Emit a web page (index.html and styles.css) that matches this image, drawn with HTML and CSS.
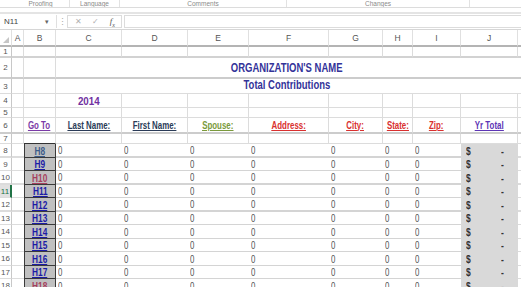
FILE: index.html
```html
<!DOCTYPE html>
<html>
<head>
<meta charset="utf-8">
<link rel="stylesheet" href="styles.css">
</head>
<body>
<div class="ribbon">
  <div class="grp sp"></div>
  <div class="grp g1"><span>Proofing</span></div>
  <div class="grp g2"><span>Language</span></div>
  <div class="grp g3"><span>Comments</span></div>
  <div class="grp g4"><span>Changes</span></div>
  <div class="grp rest"></div>
</div>
<div class="band"></div>
<div class="fbar">
  <div class="namebox"><span class="nm">N11</span><span class="arrow">▾</span></div>
  <div class="dots">⋮</div>
  <div class="fxbox"><span class="x">✕</span><span class="ok">✓</span><span class="fx">f<sub>x</sub></span></div>
  <div class="input"></div>
</div>
<div class="sheet">
  <div class="row hdr">
    <div class="corner"><span class="tri"></span></div>
    <div>A</div><div>B</div><div>C</div><div>D</div><div>E</div><div>F</div><div>G</div><div>H</div><div>I</div><div>J</div><div class="x"></div>
  </div>
  <div class="row r1">
    <div class="rh">1</div><div></div><div></div><div></div><div></div><div></div><div></div><div></div><div></div><div></div><div></div><div class="x"></div>
  </div>
  <div class="row r2 tall">
    <div class="rh">2</div><div></div><div></div><div class="title"><span class="n">ORGANIZATION'S NAME</span></div><div class="x"></div>
  </div>
  <div class="row r3 tall">
    <div class="rh">3</div><div></div><div></div><div class="title"><span class="n">Total Contributions</span></div><div class="x"></div>
  </div>
  <div class="row r4">
    <div class="rh">4</div><div></div><div></div><div class="year"><span class="n">2014</span></div><div></div><div></div><div></div><div></div><div></div><div></div><div></div><div class="x"></div>
  </div>
  <div class="row r5">
    <div class="rh">5</div><div></div><div></div><div></div><div></div><div></div><div></div><div></div><div></div><div></div><div></div><div class="x"></div>
  </div>
  <div class="row r6">
    <div class="rh">6</div><div></div>
    <div class="hd purple"><span class="n">Go To</span></div>
    <div class="hd slate"><span class="n">Last Name:</span></div>
    <div class="hd slate"><span class="n">First Name:</span></div>
    <div class="hd olive"><span class="n">Spouse:</span></div>
    <div class="hd red"><span class="n">Address:</span></div>
    <div class="hd red"><span class="n">City:</span></div>
    <div class="hd red"><span class="n">State:</span></div>
    <div class="hd red"><span class="n">Zip:</span></div>
    <div class="hd violet"><span class="n">Yr Total</span></div>
    <div class="x"></div>
  </div>
  <div class="row r7">
    <div class="rh">7</div><div></div><div class="btop"></div><div></div><div></div><div></div><div></div><div></div><div></div><div></div><div></div><div class="x"></div>
  </div>
  <div class="row d thick">
    <div class="rh">8</div><div class="a"></div><div class="go"><span class="n lk l-slate">H8</span></div>
    <div class="v"><span>0</span></div><div class="v"><span>0</span></div><div class="v"><span>0</span></div><div class="v"><span>0</span></div><div class="v"><span>0</span></div><div class="v"><span>0</span></div><div class="v"><span>0</span></div>
    <div class="tot"><span>$</span><span>-</span></div><div class="x"></div>
  </div>
  <div class="row d">
    <div class="rh">9</div><div class="a"></div><div class="go"><span class="n lk">H9</span></div>
    <div class="v"><span>0</span></div><div class="v"><span>0</span></div><div class="v"><span>0</span></div><div class="v"><span>0</span></div><div class="v"><span>0</span></div><div class="v"><span>0</span></div><div class="v"><span>0</span></div>
    <div class="tot"><span>$</span><span>-</span></div><div class="x"></div>
  </div>
  <div class="row d thick">
    <div class="rh">10</div><div class="a"></div><div class="go"><span class="n lk l-visited">H10</span></div>
    <div class="v"><span>0</span></div><div class="v"><span>0</span></div><div class="v"><span>0</span></div><div class="v"><span>0</span></div><div class="v"><span>0</span></div><div class="v"><span>0</span></div><div class="v"><span>0</span></div>
    <div class="tot"><span>$</span><span>-</span></div><div class="x"></div>
  </div>
  <div class="row d">
    <div class="rh sel">11</div><div class="a"></div><div class="go"><span class="n lk">H11</span></div>
    <div class="v"><span>0</span></div><div class="v"><span>0</span></div><div class="v"><span>0</span></div><div class="v"><span>0</span></div><div class="v"><span>0</span></div><div class="v"><span>0</span></div><div class="v"><span>0</span></div>
    <div class="tot"><span>$</span><span>-</span></div><div class="x"></div>
  </div>
  <div class="row d thick">
    <div class="rh">12</div><div class="a"></div><div class="go"><span class="n lk">H12</span></div>
    <div class="v"><span>0</span></div><div class="v"><span>0</span></div><div class="v"><span>0</span></div><div class="v"><span>0</span></div><div class="v"><span>0</span></div><div class="v"><span>0</span></div><div class="v"><span>0</span></div>
    <div class="tot"><span>$</span><span>-</span></div><div class="x"></div>
  </div>
  <div class="row d">
    <div class="rh">13</div><div class="a"></div><div class="go"><span class="n lk">H13</span></div>
    <div class="v"><span>0</span></div><div class="v"><span>0</span></div><div class="v"><span>0</span></div><div class="v"><span>0</span></div><div class="v"><span>0</span></div><div class="v"><span>0</span></div><div class="v"><span>0</span></div>
    <div class="tot"><span>$</span><span>-</span></div><div class="x"></div>
  </div>
  <div class="row d">
    <div class="rh">14</div><div class="a"></div><div class="go"><span class="n lk">H14</span></div>
    <div class="v"><span>0</span></div><div class="v"><span>0</span></div><div class="v"><span>0</span></div><div class="v"><span>0</span></div><div class="v"><span>0</span></div><div class="v"><span>0</span></div><div class="v"><span>0</span></div>
    <div class="tot"><span>$</span><span>-</span></div><div class="x"></div>
  </div>
  <div class="row d">
    <div class="rh">15</div><div class="a"></div><div class="go"><span class="n lk">H15</span></div>
    <div class="v"><span>0</span></div><div class="v"><span>0</span></div><div class="v"><span>0</span></div><div class="v"><span>0</span></div><div class="v"><span>0</span></div><div class="v"><span>0</span></div><div class="v"><span>0</span></div>
    <div class="tot"><span>$</span><span>-</span></div><div class="x"></div>
  </div>
  <div class="row d">
    <div class="rh">16</div><div class="a"></div><div class="go"><span class="n lk">H16</span></div>
    <div class="v"><span>0</span></div><div class="v"><span>0</span></div><div class="v"><span>0</span></div><div class="v"><span>0</span></div><div class="v"><span>0</span></div><div class="v"><span>0</span></div><div class="v"><span>0</span></div>
    <div class="tot"><span>$</span><span>-</span></div><div class="x"></div>
  </div>
  <div class="row d">
    <div class="rh">17</div><div class="a"></div><div class="go"><span class="n lk">H17</span></div>
    <div class="v"><span>0</span></div><div class="v"><span>0</span></div><div class="v"><span>0</span></div><div class="v"><span>0</span></div><div class="v"><span>0</span></div><div class="v"><span>0</span></div><div class="v"><span>0</span></div>
    <div class="tot"><span>$</span><span>-</span></div><div class="x"></div>
  </div>
  <div class="row d">
    <div class="rh">18</div><div class="a"></div><div class="go"><span class="n lk l-visited">H18</span></div>
    <div class="v"><span>0</span></div><div class="v"><span>0</span></div><div class="v"><span>0</span></div><div class="v"><span>0</span></div><div class="v"><span>0</span></div><div class="v"><span>0</span></div><div class="v"><span>0</span></div>
    <div class="tot"><span>$</span><span>-</span></div><div class="x"></div>
  </div>
</div>
</body>
</html>
```

FILE: styles.css
```css
* { box-sizing: border-box; margin: 0; padding: 0; }
html, body { width: 521px; height: 287px; overflow: hidden; background: #fff; }
body { font-family: "Liberation Sans", Arial, sans-serif; color: #333; }

/* ribbon group labels */
.ribbon { height: 8px; display: flex; border-bottom: 1px solid #dcdcdc; overflow: hidden;
  font-size: 6.5px; color: #8a8a8a; }
.grp { display: flex; justify-content: center; align-items: center; line-height: 7px; }
.sp { width: 12px; }
.g1 { width: 58px; border-right: 1px solid #e2e2e2; }
.g2 { width: 50px; border-right: 1px solid #e2e2e2; }
.g3 { width: 167px; border-right: 1px solid #e2e2e2; }
.g4 { width: 183px; border-right: 1px solid #e2e2e2; }
.rest { flex: 1; }

.band { height: 6px; border-bottom: 2px solid #e4e4e4; }

/* formula bar */
.fbar { height: 16px; display: flex; align-items: stretch; border-bottom: 1px solid #d6d6d6;
  font-size: 8px; color: #444; padding: 1px 0; }
.namebox { width: 57px; display: flex; align-items: center; justify-content: space-between; padding: 0 7px 0 4px;
  border-right: 1px solid #e0e0e0; }
.arrow { font-size: 7px; color: #666; }
.dots { width: 10px; display: flex; align-items: center; justify-content: center; color: #aaa; font-size: 9px; }
.fxbox { width: 55px; display: flex; align-items: center; justify-content: space-between; padding: 0 6px 0 7px;
  border: 1px solid #dcdcdc; color: #b0b0b0; font-size: 8px; }
.fxbox .fx { color: #555; font-family: "Liberation Serif", serif; font-style: italic; font-size: 9px; }
.fxbox .fx sub { font-size: 6px; }
.input { flex: 1; margin-left: 2px; border: 1px solid #dcdcdc; border-right: none; }

/* sheet grid */
.sheet { display: grid;
  grid-template-columns: 12px 12px 32px 66px 66px 61px 80px 54px 30px 48px 57px 3px;
  grid-template-rows: 17px 11px 21px 15px 14px 10px 16px 10px 14px 13px 14px 13px 14px 13px 14px 13px 14px 13px 14px; }
.row { display: contents; }
.row > div { border-right: 1px solid #dcdcdc; border-bottom: 1px solid #dcdcdc; display: flex; align-items: center;
  overflow: hidden; white-space: nowrap; }

.n { display: inline-block; transform: scaleX(0.79); }

.hdr > div { justify-content: center; font-size: 8.5px; color: #555;
  border-bottom: 2px solid #b4b4b4; border-right-color: #e0e0e0; }
.corner { position: relative; }
.tri { position: absolute; right: 2px; bottom: 2px; width: 0; height: 0;
  border-left: 6px solid transparent; border-bottom: 6px solid #c6c6c6; }

.rh { justify-content: center; font-size: 8px; color: #555;
  border-right-color: #c8c8c8 !important; }
.rh.sel { background: #e1e1e1; color: #217346; border-right: 2px solid #217346 !important; }

.r1 > div { border-bottom: 2px solid #d2d2d2; }
.r2 > div { border-bottom: 2px solid #cccccc; }
.r6 > div { border-bottom: 2px solid #cccccc; }
.tall > .title { grid-column: span 8; border-right: none; justify-content: center; align-items: flex-end; padding-bottom: 2px;
  font-weight: bold; font-size: 12px; color: #333399; }
.r3 > .title { padding-bottom: 1px; }

.year { justify-content: center; font-weight: bold; font-size: 11.5px; color: #7030a0; }
.year .n { transform: scaleX(0.85); }
.hd { justify-content: center; font-weight: bold; font-size: 10px; text-decoration: underline; }
.hd .n { text-decoration: underline; }
.purple { color: #7a3aa6; }
.slate { color: #2a3b57; }
.olive { color: #7a9a3c; }
.red { color: #d9302f; }
.violet { color: #5d35b5; }

.r7 > .btop { border-bottom: 1px solid #333; }

.thick > div { border-bottom-width: 2px; }
.d > .a { border-right: none; }
.d > .go { background: #c0c0c0; border: 1px solid #3a3a3a; border-top: none; justify-content: center; }
.lk { font-weight: bold; font-size: 10.5px; text-decoration: underline; color: #1b1ba6; }
.l-slate { color: #3d5c8a; }
.l-visited { color: #a5405e; }
.d > .v { border-right: none; border-bottom-color: #d4d4d4; padding-left: 2px; font-size: 10.5px; color: #555; }
.v span { display: inline-block; transform: scaleX(0.75); transform-origin: left center; }
.d > .tot { background: #d9d9d9; border: none; justify-content: space-between; padding: 0 14px 0 5px;
  font-weight: bold; font-size: 10px; color: #333; }
.tot span { display: inline-block; transform: scaleX(0.85); transform-origin: left center; }
.row > .x { border-right: none; }
```
